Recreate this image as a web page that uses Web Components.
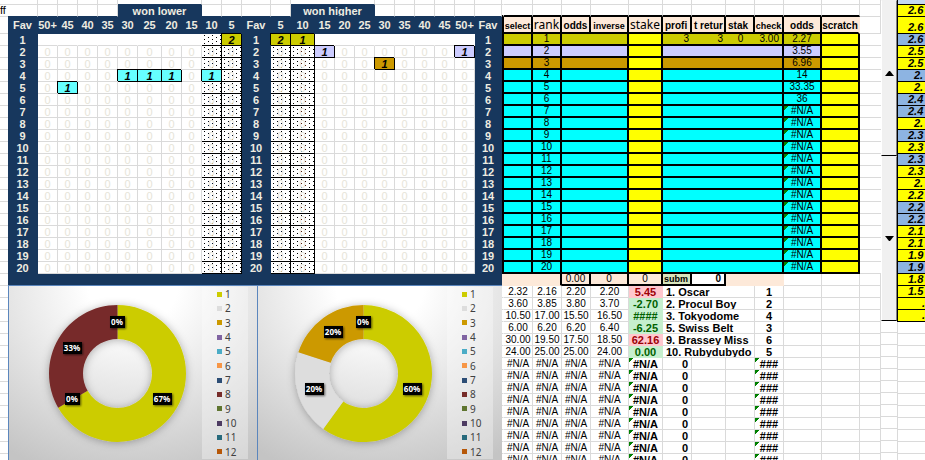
<!DOCTYPE html>
<html lang="en">
<head>
<meta charset="utf-8">
<title>Odds sheet</title>
<style>
  html, body { margin: 0; height: 100%; }
  body { background: #fff; color: #000; overflow: hidden; font: 11px/11px "Liberation Sans", Arial, sans-serif; --line: #dadada; --navy: #17375d; }
</style>
</head>
<body>
<odds-sheet></odds-sheet>
<script>
const shadow = (el, html) => { el.attachShadow({ mode: "open" }).innerHTML = html; };
const TABLE_CSS = `
  table { border-collapse: separate; border-spacing: 0; table-layout: fixed; }
  td, th { box-sizing: border-box; height: 12px; padding: 0; line-height: 10px; text-align: center; overflow: hidden; white-space: nowrap; font-weight: 400; vertical-align: middle; border: 0 solid var(--line); border-width: 0 1px 1px 0; }
  .sliver td { height: 5px; line-height: 0; }
  .head > * { height: 17px; line-height: 14px; }`;
const cols = list => `<colgroup>${list.map(w => `<col style="width:${w}px">`).join("")}</colgroup>`;

class SheetGutter extends HTMLElement {
  constructor() {
    super();
    shadow(this, `<style>
      :host { display: flex; flex-direction: column; width: 8px; overflow: hidden; }
      div { box-sizing: border-box; border-bottom: 1px solid var(--line); }
      .a { height: 5px; } .b { height: 12px; } .c { height: 17px; }
      .rest { flex: 1; border: 0; background: repeating-linear-gradient(transparent 0 11px, var(--line) 11px 12px); }
    </style><div class="a"></div><div class="b"><slot></slot></div><div class="c"></div><div class="rest"></div>`);
  }
}

class FavGrid extends HTMLElement {
  constructor() {
    super();
    const lower = ["50+", 45, 40, 35, 30, 25, 20, 15, 10, 5];
    const higher = [5, 10, 15, 20, 25, 30, 35, 40, 45, "50+"];
    const hits = { "1L9": ["2", "gold"], "4L4": ["1", "cyan"], "4L5": ["1", "cyan"], "4L6": ["1", "cyan"], "4L8": ["1", "cyan"], "5L1": ["1", "cyan"],
      "1H0": ["2", "gold"], "1H1": ["1", "gold"], "2H2": ["1", "lilac"], "2H9": ["1", "lilac"], "3H5": ["1", "amber"] };
    const blank = n => "<td></td>".repeat(n);
    const cell = (r, side, i) => {
      const near = side === "L" ? i > 7 : i < 2;
      const hit = hits[r + side + i];
      if (hit) return `<td class="hit ${near ? "near" : ""} ${hit[1]}">${hit[0]}</td>`;
      return `<td class="${near ? "near dots" : r === 1 ? "plain" : ""}">${r === 1 ? "" : "0"}</td>`;
    };
    const ten = (r, side) => Array.from({ length: 10 }, (_, i) => cell(r, side, i)).join("");
    const heads = list => list.map(t => `<th scope="col">${t}</th>`).join("");
    let body = "";
    for (let r = 1; r <= 20; r++) body += `<tr class="r"><th scope="row">${r}</th>${ten(r, "L")}<th>${r}</th>${ten(r, "H")}<th>${r}</th></tr>`;
    shadow(this, `<style>${TABLE_CSS}
      :host { display: block; background: var(--navy); padding-bottom: 11px; }
      table { width: 494px; background: #fff; }
      th { background: var(--navy); color: #eeece1; font-weight: 700; border-color: var(--navy); }
      .top td { border-bottom-color: var(--navy); }
      .sliver .band { border-bottom-color: var(--navy); }
      .r td { color: #e6e4d8; }
      .r td.plain { border-right-color: #fff; }
      .r td.near { border-color: #000; }
      .r td.dots { background: linear-gradient(#000, #000), linear-gradient(#000, #000), #fff; background: conic-gradient(from 270deg at 1px 1px, #000 90deg, transparent 0) 2px 1px / 8px 4px, conic-gradient(from 270deg at 1px 1px, #000 90deg, transparent 0) 6px 3px / 8px 4px, #fff; }
      .r td.hit { color: #000; font-weight: 700; font-style: italic; border-color: #000; box-shadow: -1px -1px #000; position: relative; }
      .gold { background: #cccc00; } .cyan { background: #66ffff; } .lilac { background: #ccccff; } .amber { background: #cc9900; }
    </style><table>${cols([30, 20, 20, 20, 20, 20, 24, 20, 20, 20, 20, 29, 20, 24, 20, 20, 20, 20, 20, 20, 20, 20, 27])}
      <tbody><tr class="sliver">${blank(5)}<td class="band" colspan="4"></td>${blank(4)}<td class="band" colspan="4"></td>${blank(6)}</tr>
      <tr class="top">${blank(5)}<th colspan="4">won lower</th>${blank(4)}<th colspan="4">won higher</th>${blank(6)}</tr>
      <tr class="head"><th scope="col">Fav</th>${heads(lower)}<th scope="col">Fav</th>${heads(higher)}<th scope="col">Fav</th></tr>${body}</tbody></table>`);
  }
}

class ShareChart extends HTMLElement {
  connectedCallback() {
    const cx = +this.getAttribute("cx"), cy = 87.5, R = 68.5, r = 34.5;
    const at = (f, rad) => `${cx + rad * Math.sin(f * 2 * Math.PI)} ${cy - rad * Math.cos(f * 2 * Math.PI)}`;
    let from = 0;
    const arcs = JSON.parse(this.getAttribute("slices")).map(([share, color]) => {
      const to = from + share, big = share > .5 ? 1 : 0;
      const d = `M${at(from, R)}A${R} ${R} 0 ${big} 1 ${at(to, R)}L${at(to, r)}A${r} ${r} 0 ${big} 0 ${at(from, r)}Z`;
      from = to;
      return `<path d="${d}" fill="${color}"/>`;
    }).join("");
    const tags = JSON.parse(this.getAttribute("tags")).map(([t, x, y]) => {
      const w = t.length > 2 ? 19 : 15;
      return `<g filter="url(#tag)"><rect x="${x - (w - 1) / 2}" y="${y - 6}" width="${w}" height="12"/></g><text x="${x}" y="${y + 3}">${t}</text>`;
    }).join("");
    const colors = ["#cccc00", "#dddddd", "#cc9900", "#8064a2", "#4bacc6", "#f79646", "#2c4d75", "#772c2a", "#5f7530", "#4d3b62", "#276a7c", "#b65708"];
    shadow(this, `<style>
      :host { display: flex; box-sizing: border-box; min-width: 0; height: 181px; border: 1px solid #5b86bd; border-width: 1px 0 0 1px; background: radial-gradient(ellipse 90% 110% at 50% 0, #fff 20%, #e2e2e2 60%, #c4c4c4 100%); }
      svg { flex: 1; width: 0; min-width: 0; height: 180px; overflow: visible; }
      text { font: 700 8px/8px "Noto Sans", sans-serif; fill: #fff; text-anchor: middle; }
      ul { box-sizing: border-box; width: 46px; height: 172px; margin: 1px 9px 0 0; padding: 0 0 0 15px; list-style: none; background: #ffffff55; display: flex; flex-direction: column; justify-content: space-around; font: 10px/14px "Noto Sans", sans-serif; color: #404040; }
      li { display: flex; align-items: center; gap: 3px; }
      i { width: 5px; height: 5px; }
    </style>
    <svg aria-hidden="true"><defs>
      <filter id="ring" x="-20%" y="-20%" width="140%" height="140%"><feDropShadow dx="0" dy="1" stdDeviation="4" flood-opacity=".3"/></filter>
      <filter id="tag" x="-30%" y="-30%" width="170%" height="180%"><feDropShadow dx="1" dy="1" stdDeviation="1" flood-opacity=".6"/></filter></defs>
      <g filter="url(#ring)">${arcs}</g>${tags}</svg>
    <ul>${colors.map((c, i) => `<li><i style="background:${c}"></i>${i + 1}</li>`).join("")}</ul>`);
  }
}

class StakeTable extends HTMLElement {
  constructor() {
    super();
    const odds = ["2.27", "3.55", "6.96", "14", "33.35", "36"];
    const tint = ["gold", "lilac", "amber"];
    let ranks = "";
    for (let i = 0; i < 20; i++) {
      const c = tint[i] || "aqua", first = i === 0;
      ranks += `<tr class="k small ${c}"><td class="ink"></td><td></td><td>${i + 1}</td><td colspan="2"></td><td class="yel"></td>` +
        (first ? `<td class="open num">3</td><td class="open num">3</td><td class="open">0</td><td class="num">3.00</td>` : `<td colspan="4"></td>`) +
        `<td class="${i > 5 ? "flag" : ""}">${odds[i] || "#N/A"}</td><td class="yel"></td><td class="g"></td></tr>`;
    }
    const runners = [
      ["2.32", "2.16", "2.20", "2.20", "5.45", "bad", "1. Oscar", 1],
      ["3.60", "3.85", "3.80", "3.70", "-2.70", "good", "2. Procul Boy", 2],
      ["10.50", "17.00", "15.50", "16.50", "####", "good", "3. Tokyodome", 4],
      ["6.00", "6.20", "6.20", "6.40", "-6.25", "good", "5. Swiss Belt", 3],
      ["30.00", "19.50", "17.50", "18.50", "62.16", "bad", "9. Brassey Miss", 6],
      ["24.00", "25.00", "25.00", "24.00", "0.00", "good", "10. Rubydubydo", 5]
    ].map(v => `<tr><td></td>${v.slice(0, 4).map(t => `<td class="price">${t}</td>`).join("")}<td class="b ${v[5]}">${v[4]}</td><td class="b name" colspan="3">${v[6]}</td><td class="b">${v[7]}</td><td></td><td></td><td></td></tr>`).join("");
    const empty = `<tr><td></td>${`<td class="price">#N/A</td>`.repeat(4)}<td class="b flag">#N/A</td><td class="b num">0</td><td></td><td></td><td class="b flag">###</td><td></td><td></td><td></td></tr>`.repeat(9);
    shadow(this, `<style>${TABLE_CSS}
      :host { display: block; }
      table { width: 379px; }
      td:first-child { border-right-color: transparent; }
      .top td:not(:last-child) { border-bottom: 2px solid #000; }
      .head th { background: #fde9d9; font-size: 10px; font-weight: 700; border: 0 solid #000; border-width: 0 2px 2px 0; padding-top: 2px; line-height: 12px; }
      .head th.wide { font-size: 9px; }
      .head th.end { border-right-color: #fde9d9; }
      .head th.left { text-align: left; padding-left: 2px; }
      .head th.soft { font: 400 12px/14px "Noto Sans", sans-serif; padding-top: 0; }
      td.ink { background: #000; border: 0; }
      .k td { border: 0 solid #000; border-width: 0 2px 2px 0; }
      .k td.g { border: 0 solid var(--line); border-width: 0 0 1px; background: #fff; }
      .k td.open { border-right: 0; }
      .small td, .price { font-size: 10px; }
      .num { text-align: right; padding-right: 3px; }
      .gold td { background: #cccc00; } .lilac td { background: #ccccff; } .amber td { background: #cc9900; } .aqua td { background: #00ffff; }
      .k td.ink { background: #000; } .k td.yel { background: #ffff00; }
      td.flag { background-image: linear-gradient(135deg, #008000 0 3px, transparent 3px); }
      .sum .p { background: #fde9d9; border-color: #fde9d9; }
      .sum .box { border: 0 solid #000; border-width: 0 2px 2px 0; }
      .sum .p.edge { border-right: 2px solid #000; }
      .b { font-weight: 700; }
      .bad { background: #ffc7ce; color: #9c0006; border-color: #ffc7ce; }
      .good { background: #c6efce; color: #006100; border-color: #c6efce; }
      .name { text-align: left; padding-left: 3px; }
      .sum .olive { background: #d8e4bc; padding-left: 1px; font-size: 9px; }
    </style><table>${cols([2, 29, 29, 29, 38, 34, 29, 34, 29, 29, 38, 38, 21])}
      <tbody><tr class="sliver">${"<td></td>".repeat(13)}</tr><tr class="top">${"<td></td>".repeat(13)}</tr>
      <tr class="head"><td class="ink"></td><th class="wide" scope="col">select</th><th class="soft" scope="col">rank</th><th scope="col">odds</th><th class="wide" scope="col">inverse</th><th class="soft" scope="col">stake</th><th class="left" scope="col">profi</th><th class="left" scope="col">t retur</th><th class="left" scope="col">stak</th><th class="wide" scope="col">check</th><th scope="col">odds</th><th class="end" scope="col">scratch</th><td></td></tr>
      ${ranks}
      <tr class="sum small"><td class="p"></td><td class="p"></td><td class="p edge"></td><td class="p box">0.00</td><td class="p box">0</td><td class="p box">0</td><td class="b olive box name">subm</td><td class="b box num">0</td><td class="p"></td><td class="p"></td><td></td><td></td><td></td></tr>
      ${runners}${empty}</tbody></table>`);
  }
}

class SpinBar extends HTMLElement {
  constructor() {
    super();
    shadow(this, `<style>
      :host { display: flex; flex-direction: column; width: 16px; }
      button { box-sizing: border-box; width: 100%; margin: 0; padding: 0; border: 1px solid #fff; border-right: 1px solid #808080; border-bottom: 1px solid #000; border-top-color: #f0f0f0; background: #f0f0f0; display: flex; justify-content: center; align-items: center; }
      .up { height: 156px; padding-bottom: 10px; } .down { height: 165px; }
      .rest { flex: 1; background: repeating-linear-gradient(transparent 0 12px, var(--line) 12px 13px, transparent 13px 12px); background: repeating-linear-gradient(transparent 0 11px, var(--line) 11px 12px); }
    </style><button class="up" aria-label="Up"><svg width="9" height="5"><path d="M4 0h1l4 5H0z"/></svg></button>
    <button class="down" aria-label="Down"><svg width="9" height="5"><path d="M0 0h9L5 5H4z"/></svg></button><div class="rest"></div>`);
  }
}

class PriceList extends HTMLElement {
  constructor() {
    super();
    const rows = "2.6y 2.6y 2.6b 2.5y 2.5y 2.b 2.y 2.4b 2.4b 2.y 2.3b 2.3y 2.3b 2.3y 2.y 2.2y 2.2b 2.2b 2.1y 2.1y 1.9y 1.9b 1.8y 1.5y .y .y".split(" ");
    shadow(this, `<style>
      :host { display: flex; flex-direction: column; flex: 1; min-width: 0; overflow: hidden; }
      ol { list-style: none; margin: 0; padding: 0; border-left: 1px solid #000; font-weight: 700; font-style: italic; }
      li { box-sizing: border-box; height: 12px; line-height: 11px; padding-left: 10px; border-bottom: 1px solid #000; background: #ffff00; white-space: nowrap; overflow: hidden; }
      li.b { background: #8db4e2; } li.tall { height: 17px; line-height: 20px; }
      li.short { padding-left: 16px; } li.dot { padding-left: 24px; }
      li.cap { height: 5px; background: #c5d9f1; }
      .rest { flex: 1; border-left: 1px solid var(--line); background: repeating-linear-gradient(transparent 0 11px, var(--line) 11px 12px); }
    </style><ol><li class="cap"></li>${rows.map((t, i) => {
      const v = t.slice(0, -1);
      return `<li class="${t.slice(-1)} ${i === 1 ? "tall" : ""} ${v === "." ? "dot" : v.length < 3 ? "short" : ""}">${v}</li>`;
    }).join("")}</ol><div class="rest"></div>`);
  }
}

class OddsSheet extends HTMLElement {
  constructor() {
    super();
    shadow(this, `<style>
      :host { display: flex; height: 100vh; overflow: hidden; }
      sheet-gutter, .left, stake-table, spin-bar { flex: none; }
      .charts { display: grid; grid-template-columns: 249fr 245fr; }
    </style>
    <sheet-gutter>ff</sheet-gutter>
    <div class="left"><fav-grid></fav-grid><div class="charts">
      <share-chart cx="108.5" slices='[[0.6667,"#cccc00"],[0.3333,"#772c2a"]]' tags='[["0%",108,36],["33%",63,62],["0%",63,113],["67%",153,113]]'></share-chart>
      <share-chart cx="105.5" slices='[[0.6,"#cccc00"],[0.2,"#dddddd"],[0.2,"#cc9900"]]' tags='[["0%",105,36],["20%",75,46],["20%",56,103],["60%",154,103]]'></share-chart>
    </div></div>
    <stake-table></stake-table><spin-bar></spin-bar><price-list></price-list>`);
  }
}

customElements.define("sheet-gutter", SheetGutter);
customElements.define("fav-grid", FavGrid);
customElements.define("share-chart", ShareChart);
customElements.define("stake-table", StakeTable);
customElements.define("spin-bar", SpinBar);
customElements.define("price-list", PriceList);
customElements.define("odds-sheet", OddsSheet);
</script>
</body>
</html>
